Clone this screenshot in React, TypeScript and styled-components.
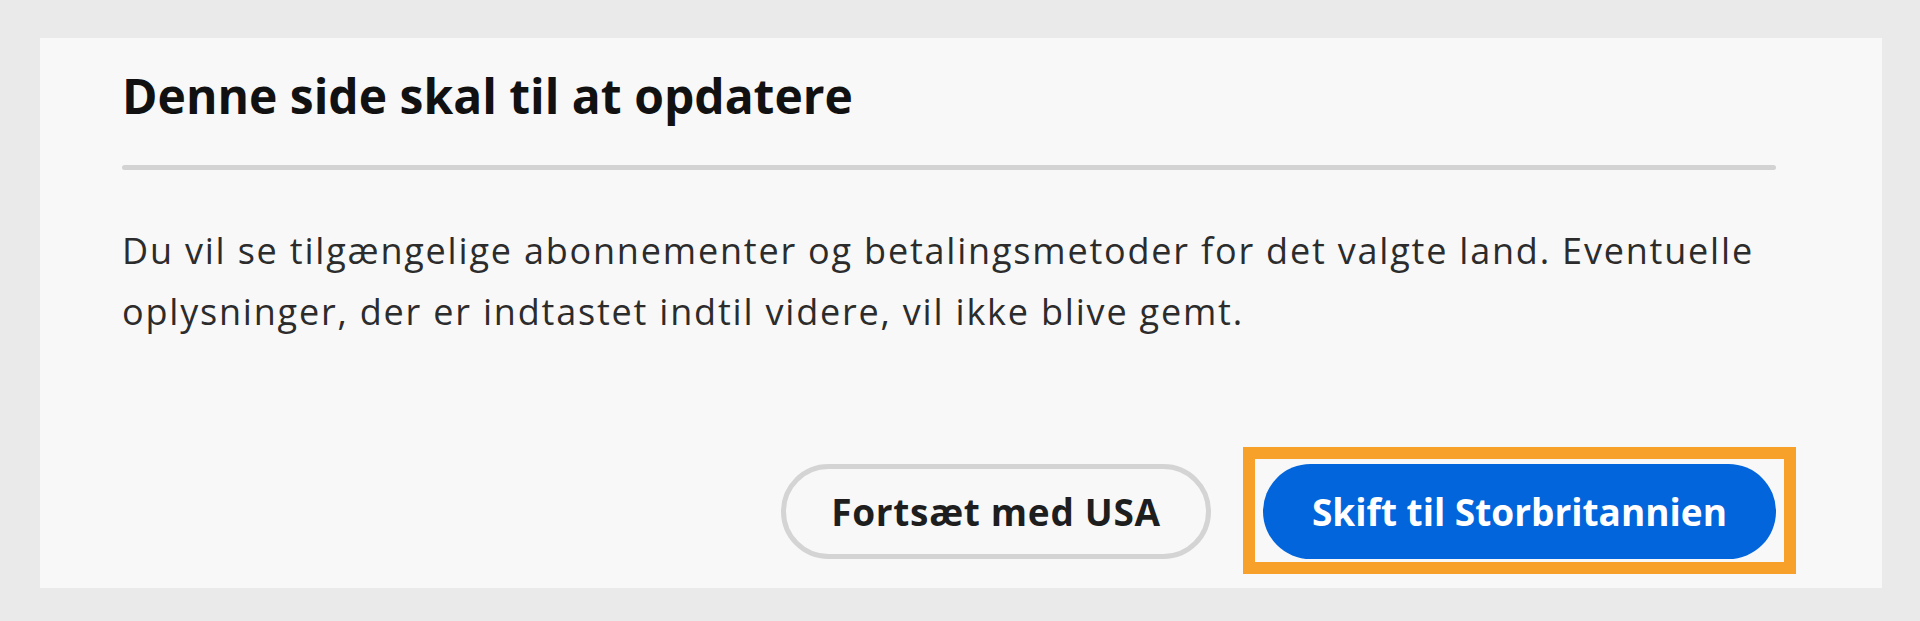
import styled, { createGlobalStyle } from 'styled-components';

const GlobalStyle = createGlobalStyle`
  html, body {
    margin: 0;
    padding: 0;
    background: #eaeaea;
  }
  body {
    font-family: "Open Sans", Lato, "Liberation Sans", sans-serif;
  }
`;

const Page = styled.div`
  width: 1920px;
  height: 621px;
  box-sizing: border-box;
  padding: 38px 38px 33px 40px;
  background: #eaeaea;
`;

const Card = styled.section`
  height: 100%;
  box-sizing: border-box;
  background: #f8f8f8;
  padding: 28px 106px 29px 82px;
  display: flex;
  flex-direction: column;
`;

const Title = styled.h2`
  margin: 0;
  font-size: 48px;
  line-height: 60px;
  font-weight: 700;
  color: #111;
`;

const Divider = styled.hr`
  margin: 39px 0 0;
  border: 0;
  height: 5px;
  border-radius: 3px;
  background: #d3d3d3;
`;

const Body = styled.p`
  margin: 50px 0 0;
  font-size: 36px;
  line-height: 61px;
  letter-spacing: 1.8px;
  color: #2c2c2c;
`;

const Actions = styled.div`
  margin-top: auto;
  display: flex;
  justify-content: flex-end;
  align-items: center;
  gap: 52px;
`;

const Button = styled.button<{ $primary?: boolean }>`
  height: 95px;
  box-sizing: border-box;
  padding: 0 40px;
  border-radius: 48px;
  font-family: inherit;
  font-size: 37px;
  font-weight: 700;
  cursor: pointer;
  white-space: nowrap;
  letter-spacing: ${(p) => (p.$primary ? '0' : '0.7px')};
  border: ${(p) => (p.$primary ? '0' : '5px solid #d4d4d4')};
  background: ${(p) => (p.$primary ? '#0265dc' : '#f8f8f8')};
  color: ${(p) => (p.$primary ? '#fff' : '#1e1e1e')};
`;

const Highlight = styled.div`
  position: relative;
  &::after {
    content: '';
    position: absolute;
    inset: -17px -20px -15px -20px;
    border: 12px solid #f8a12a;
    pointer-events: none;
  }
`;

export default function App() {
  return (
    <>
      <GlobalStyle />
      <Page>
        <Card>
          <Title>Denne side skal til at opdatere</Title>
          <Divider />
          <Body>
            Du vil se tilgængelige abonnementer og betalingsmetoder for det valgte land. Eventuelle
            <br />
            oplysninger, der er indtastet indtil videre, vil ikke blive gemt.
          </Body>
          <Actions>
            <Button style={{ width: 430 }}>Fortsæt med USA</Button>
            <Highlight>
              <Button $primary style={{ width: 513 }}>
                Skift til Storbritannien
              </Button>
            </Highlight>
          </Actions>
        </Card>
      </Page>
    </>
  );
}
